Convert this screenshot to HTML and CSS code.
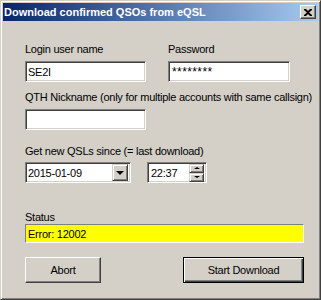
FILE: index.html
```html
<!DOCTYPE html>
<html lang="en">
<head>
  <meta charset="UTF-8">
  <title>Download confirmed QSOs from eQSL</title>
  <link rel="stylesheet" href="styles.css">
</head>
<body>
  <div class="window">
    <div class="titlebar">
      <span class="title">Download confirmed QSOs from eQSL</span>
      <span class="close-btn">
        <svg width="8" height="7" viewBox="0 0 8 7"><path d="M0 0h2l2 2 2-2h2v1L5 3.5 8 6v1H6L4 5 2 7H0V6l3-2.5L0 1z" fill="#000"/></svg>
      </span>
    </div>

    <div class="content">
      <div class="row">
        <div class="field">
          <label>Login user name</label>
          <div class="input login">SE2I</div>
        </div>
        <div class="field">
          <label>Password</label>
          <div class="input password">********</div>
        </div>
      </div>

      <div class="field qth">
        <label>QTH Nickname (only for multiple accounts with same callsign)</label>
        <div class="input login"></div>
      </div>

      <div class="field since">
        <label>Get new QSLs since (= last download)</label>
        <div class="row pickers">
          <div class="input date">
            <span>2015-01-09</span>
            <span class="drop-btn"><i class="arrow-down"></i></span>
          </div>
          <div class="input time">
            <span>22:37</span>
            <span class="spin">
              <span class="spin-btn"><i class="arrow-up small"></i></span>
              <span class="spin-btn"><i class="arrow-down small"></i></span>
            </span>
          </div>
        </div>
      </div>

      <div class="field status-field">
        <label>Status</label>
        <div class="status">Error: 12002</div>
      </div>

      <div class="buttons">
        <button class="btn abort">Abort</button>
        <button class="btn default">Start Download</button>
      </div>
    </div>
  </div>
</body>
</html>
```

FILE: styles.css
```css
* {
  margin: 0;
  padding: 0;
  box-sizing: border-box;
}

body {
  font-family: "Liberation Sans", Arial, sans-serif;
  font-size: 11px;
  letter-spacing: -0.25px;
  color: #000;
  background: #d4d0c8;
}

.window {
  width: 321px;
  height: 300px;
  background: #d4d0c8;
  border: 1px solid;
  border-color: #d4d0c8 #404040 #404040 #d4d0c8;
  box-shadow: inset 1px 1px #fff, inset -1px -1px #808080;
  padding: 2px;
}

.titlebar {
  height: 18px;
  display: flex;
  align-items: center;
  justify-content: space-between;
  padding: 0 2px 0 1px;
  background: linear-gradient(90deg, #0a246a 0%, #a6caf0 100%);
}

.title {
  color: #fff;
  font-weight: bold;
  font-size: 11px;
  letter-spacing: 0;
}

.close-btn {
  width: 16px;
  height: 14px;
  display: flex;
  align-items: center;
  justify-content: center;
  background: #d4d0c8;
  border: 1px solid;
  border-color: #fff #404040 #404040 #fff;
  box-shadow: inset -1px -1px #808080;
}

.content {
  padding: 22px 0 0 22px;
}

.row {
  display: flex;
  gap: 22px;
}

label {
  display: block;
  line-height: 13px;
  margin-bottom: 5px;
  white-space: nowrap;
}

.input {
  height: 21px;
  display: flex;
  align-items: center;
  padding-left: 2px;
  background: #fff;
  border: 1px solid;
  border-color: #808080 #fff #fff #808080;
  box-shadow: inset 1px 1px #404040, inset -1px -1px #d4d0c8;
  padding-top: 1px;
}

.login {
  width: 121px;
}

.password {
  width: 122px;
  font-size: 12px;
  letter-spacing: 0.4px;
  padding-left: 3px;
}

.qth {
  margin-top: 9px;
}

.since {
  margin-top: 15px;
}

.since label {
  margin-bottom: 4px;
}

.pickers {
  gap: 16px;
}

.date {
  width: 106px;
  justify-content: space-between;
  padding-right: 2px;
}

.time {
  width: 60px;
  justify-content: space-between;
  padding-left: 3px;
  padding-right: 2px;
}

.drop-btn {
  width: 16px;
  height: 17px;
  margin-top: -1px;
  display: flex;
  align-items: center;
  justify-content: center;
  background: #d4d0c8;
  border: 1px solid;
  border-color: #d4d0c8 #404040 #404040 #d4d0c8;
  box-shadow: inset 1px 1px #fff, inset -1px -1px #808080;
}

.spin {
  display: flex;
  flex-direction: column;
  margin-top: -1px;
}

.spin-btn {
  width: 15px;
  height: 9px;
  display: flex;
  align-items: center;
  justify-content: center;
  background: #d4d0c8;
  border: 1px solid;
  border-color: #d4d0c8 #404040 #404040 #d4d0c8;
  box-shadow: inset 1px 1px #fff, inset -1px -1px #808080;
}

.arrow-down {
  width: 0;
  height: 0;
  border-left: 4px solid transparent;
  border-right: 4px solid transparent;
  border-top: 4px solid #000;
}

.arrow-up {
  width: 0;
  height: 0;
  border-left: 4px solid transparent;
  border-right: 4px solid transparent;
  border-bottom: 4px solid #000;
}

.arrow-down.small {
  border-left-width: 3px;
  border-right-width: 3px;
  border-top-width: 2px;
}

.arrow-up.small {
  border-left-width: 3px;
  border-right-width: 3px;
  border-bottom-width: 2px;
}

.status-field {
  margin-top: 28px;
}

.status-field label {
  margin-bottom: 0;
}

.status {
  width: 279px;
  height: 19px;
  display: flex;
  align-items: center;
  padding: 1px 0 0 2px;
  background: #ffff00;
  border: 1px solid;
  border-color: #808080 #fff #fff #808080;
}

.buttons {
  width: 279px;
  margin-top: 14px;
  display: flex;
  justify-content: space-between;
}

.btn {
  height: 26px;
  font-family: inherit;
  font-size: 11px;
  letter-spacing: -0.25px;
  color: #000;
  background: #d4d0c8;
  border: 1px solid;
  border-color: #fff #404040 #404040 #fff;
  box-shadow: inset -1px -1px #808080;
}

.abort {
  width: 76px;
}

.default {
  width: 121px;
  border: 1px solid #000;
  box-shadow: inset 1px 1px #fff, inset -1px -1px #404040, inset -2px -2px #808080;
}
```
